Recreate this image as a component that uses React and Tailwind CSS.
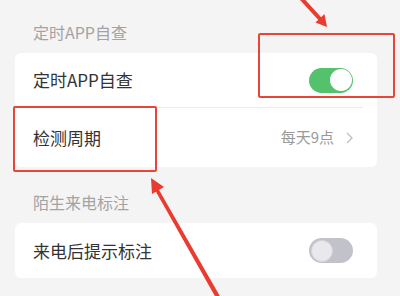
const font = { fontFamily: '"Noto Sans CJK SC", "Noto Sans", sans-serif' };

function Toggle({ on }) {
  if (on) {
    return (
      <div className="w-[44px] h-[25px] rounded-full bg-[#54c26c] flex items-center justify-end p-[1.5px]">
        <div className="w-[22px] h-[22px] rounded-full bg-white" />
      </div>
    );
  }
  return (
    <div className="w-[44px] h-[25px] rounded-full bg-[#c2c2ca] flex items-center justify-start p-[1.5px]">
      <div className="w-[22px] h-[22px] rounded-full bg-[#e9e9ed] border border-[#d6d6dc]" />
    </div>
  );
}

function Header({ children, top }) {
  return (
    <div className={`${top} mb-[10px] pl-[18px] text-[16px] leading-[22px] text-[#a3a3a3]`}>
      {children}
    </div>
  );
}

function Annotations() {
  return (
    <>
      <div className="absolute left-[13px] top-[106px] w-[144px] h-[66px] border-2 border-[#e8453a] rounded-[2px]" />
      <div className="absolute left-[258px] top-[33px] w-[137px] h-[65px] border-2 border-[#e8453a] rounded-[2px]" />
      <svg className="absolute left-0 top-0" width="400" height="296" viewBox="0 0 400 296">
        <line x1="300" y1="-3" x2="321" y2="20" stroke="#ea3b2f" strokeWidth="4" />
        <polygon points="327,27 315.5,22.5 324.5,14" fill="#ea3b2f" />
        <polygon points="216,298 221,298 158.5,189 155.5,191" fill="#ea3b2f" />
        <polygon points="151,178 164,187 152,194" fill="#ea3b2f" />
      </svg>
    </>
  );
}

export default function App() {
  return (
    <div className="relative w-[400px] h-[296px] overflow-hidden bg-[#f4f4f4]" style={font}>
      <div className="pl-[15px] pr-[23px]">
        <Header top="pt-[21px]">定时APP自查</Header>
        <div className="bg-white rounded-[6px]">
          <div className="h-[54px] flex items-center justify-between pl-[18px] pr-[24px]">
            <span className="text-[17px] text-[#333]">定时APP自查</span>
            <Toggle on />
          </div>
          <div className="ml-[18px] mr-[14px] h-px bg-[#ececec]" />
          <div className="h-[59px] flex items-center justify-between pl-[18px] pr-[24px]">
            <span className="text-[17px] text-[#333]">检测周期</span>
            <div className="flex items-center gap-[12px] text-[#9a9a9a]">
              <span className="text-[15px]">每天9点</span>
              <svg width="7" height="12" viewBox="0 0 7 12">
                <path d="M1 1 L6 6 L1 11" fill="none" stroke="#bdbdbd" strokeWidth="1.3" />
              </svg>
            </div>
          </div>
        </div>
        <Header top="pt-[24px]">陌生来电标注</Header>
        <div className="bg-white rounded-[6px]">
          <div className="h-[55px] flex items-center justify-between pl-[18px] pr-[24px]">
            <span className="text-[17px] text-[#333]">来电后提示标注</span>
            <Toggle />
          </div>
        </div>
      </div>
      <Annotations />
    </div>
  );
}
